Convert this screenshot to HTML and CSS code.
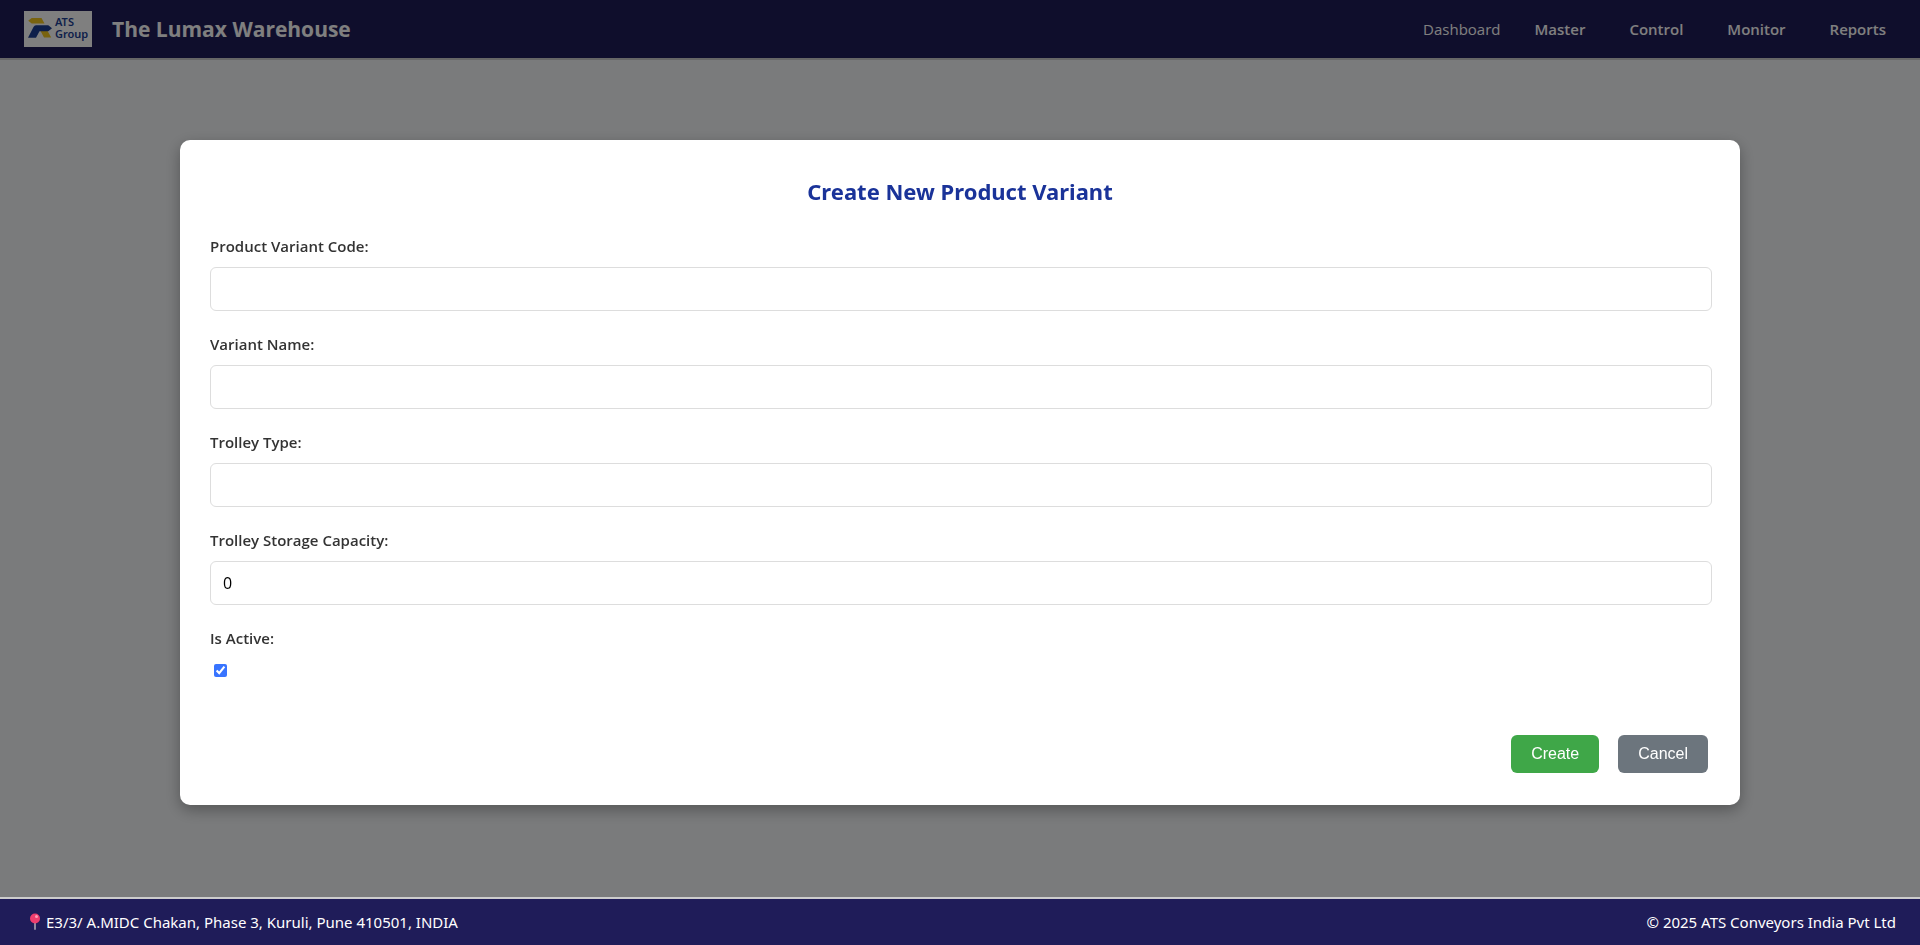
FILE: index.html
```html
<!DOCTYPE html>
<html lang="en">
<head>
<meta charset="utf-8">
<title>The Lumax Warehouse</title>
<link rel="stylesheet" href="styles.css">
</head>
<body>
<header class="header">
  <div class="brand">
    <svg class="logo" viewBox="0 0 68 36" role="img" aria-label="ATS Group">
      <rect width="68" height="36" fill="#fff"/>
      <path d="M4.200 9.800L7.700 7H17.500L20.500 12.600H7.700Z" fill="#f2c61f"/>
      <path d="M16 19H23L27.200 26.500H20Z" fill="#f2c61f"/>
      <path d="M12 14.300H24.300L28 17.300L24.300 20.200H15.500L12 26.700H4L9.500 16Q10.400 14.300 12 14.300Z" fill="#1d3f94"/>
      <text class="logo-text" x="31" y="15">ATS</text>
      <text class="logo-text" x="31" y="27">Group</text>
    </svg>
    <h1 class="brand-name">The Lumax Warehouse</h1>
  </div>
  <nav class="nav">
    <a class="nav-link nav-home" href="#">Dashboard</a>
    <a class="nav-link" href="#">Master</a>
    <a class="nav-link" href="#">Control</a>
    <a class="nav-link" href="#">Monitor</a>
    <a class="nav-link" href="#">Reports</a>
  </nav>
</header>

<main class="overlay">
  <section class="modal" role="dialog" aria-modal="true" aria-labelledby="modal-title">
    <h2 class="modal-title" id="modal-title">Create New Product Variant</h2>
    <form class="form">
      <div class="field">
        <label class="label" for="code">Product Variant Code:</label>
        <input class="input" id="code" type="text">
      </div>
      <div class="field">
        <label class="label" for="name">Variant Name:</label>
        <input class="input" id="name" type="text">
      </div>
      <div class="field">
        <label class="label" for="trolley">Trolley Type:</label>
        <input class="input" id="trolley" type="text">
      </div>
      <div class="field">
        <label class="label" for="capacity">Trolley Storage Capacity:</label>
        <input class="input" id="capacity" type="number" value="0">
      </div>
      <div class="field">
        <label class="label" for="active">Is Active:</label>
        <input class="checkbox" id="active" type="checkbox" checked>
      </div>
      <div class="actions">
        <button class="button button-create" type="submit">Create</button>
        <button class="button button-cancel" type="button">Cancel</button>
      </div>
    </form>
  </section>
</main>

<footer class="footer">
  <div class="address">
    <svg class="pin" viewBox="0 0 12 18" aria-hidden="true">
      <rect x="5" y="8" width="2" height="9" rx="1" fill="#8d8aa0"/>
      <circle cx="6" cy="5.500" r="5" fill="#ee3d6e"/>
      <circle cx="7.500" cy="3.500" r="1.500" fill="#ff9db5"/>
    </svg>
    <span>E3/3/ A.MIDC Chakan, Phase 3, Kuruli, Pune 410501, INDIA</span>
  </div>
  <span>© 2025 ATS Conveyors India Pvt Ltd</span>
</footer>
</body>
</html>
```
FILE: styles.css
```css
* {
  box-sizing: border-box;
}

body {
  margin: 0;
  min-height: 100vh;
  display: flex;
  flex-direction: column;
  justify-content: space-between;
  background: #f4f6f8;
  font-family: "Open Sans", "Noto Sans", sans-serif;
  font-size: 15px;
}

.header {
  display: flex;
  align-items: center;
  justify-content: space-between;
  padding: 11px 34px 11px 24px;
  background: #1f1c59;
  border-bottom: 2px solid #ccc;
  color: #fff;
}

.brand {
  display: flex;
  align-items: center;
  gap: 20px;
}

.logo {
  width: 68px;
  height: 36px;
}

.logo-text {
  font-family: "Noto Sans", sans-serif;
  font-size: 11px;
  font-weight: 600;
  line-height: 12px;
  fill: #1d3f94;
}

.brand-name {
  margin: 0;
  font-size: 21px;
  line-height: 32px;
  font-weight: 700;
}

.nav {
  display: flex;
  align-items: center;
  gap: 44px;
}

.nav-link {
  color: #fff;
  font-weight: 600;
  line-height: 24px;
  text-decoration: none;
}

.nav-home {
  font-weight: 400;
  margin-right: -10px;
}

.overlay {
  position: fixed;
  inset: 0;
  z-index: 10;
  display: flex;
  align-items: center;
  justify-content: center;
  background: rgba(0, 0, 0, 0.5);
}

.modal {
  width: 100%;
  max-width: 1560px;
  padding: 30px;
  border-radius: 10px;
  background: #fff;
  box-shadow: 0 5px 15px rgba(0, 0, 0, 0.3);
}

.modal-title {
  margin: 0 0 24px;
  color: #1a3399;
  font-family: "Noto Sans", sans-serif;
  font-size: 22px;
  line-height: 42px;
  font-weight: 700;
  text-align: center;
}

.form {
  display: flex;
  flex-direction: column;
  gap: 23px;
  margin-right: -2px;
}

.field {
  display: flex;
  flex-direction: column;
  gap: 10px;
}

.label {
  color: #333;
  font-weight: 600;
  font-size: 15px;
  line-height: 21px;
}

.input {
  width: 100%;
  height: 44px;
  padding: 0 12px;
  border: 1px solid #ddd;
  border-radius: 6px;
  background: #fff;
  color: #000;
  font-family: inherit;
  font-size: 16px;
}

.checkbox {
  width: 13px;
  height: 13px;
  margin: 5px 4px 8px;
  accent-color: #3874ff;
}

.actions {
  display: flex;
  justify-content: flex-end;
  gap: 19px;
  padding: 27px 4px 2px 0;
}

.button {
  height: 38px;
  padding: 0 20px;
  border: 0;
  border-radius: 6px;
  color: #fff;
  font-family: "Liberation Sans", Arial, sans-serif;
  font-size: 16px;
}

.button-create {
  background: #3fa748;
}

.button-cancel {
  background: #6c757d;
}

.footer {
  position: relative;
  z-index: 20;
  display: flex;
  align-items: center;
  justify-content: space-between;
  padding: 11px 24px 11px 29px;
  background: #1f1c59;
  border-top: 2px solid #ccc;
  color: #fff;
  font-family: "Noto Sans", sans-serif;
  line-height: 24px;
}

.address {
  display: flex;
  align-items: center;
  gap: 5px;
}

.pin {
  width: 12px;
  height: 18px;
}
```
